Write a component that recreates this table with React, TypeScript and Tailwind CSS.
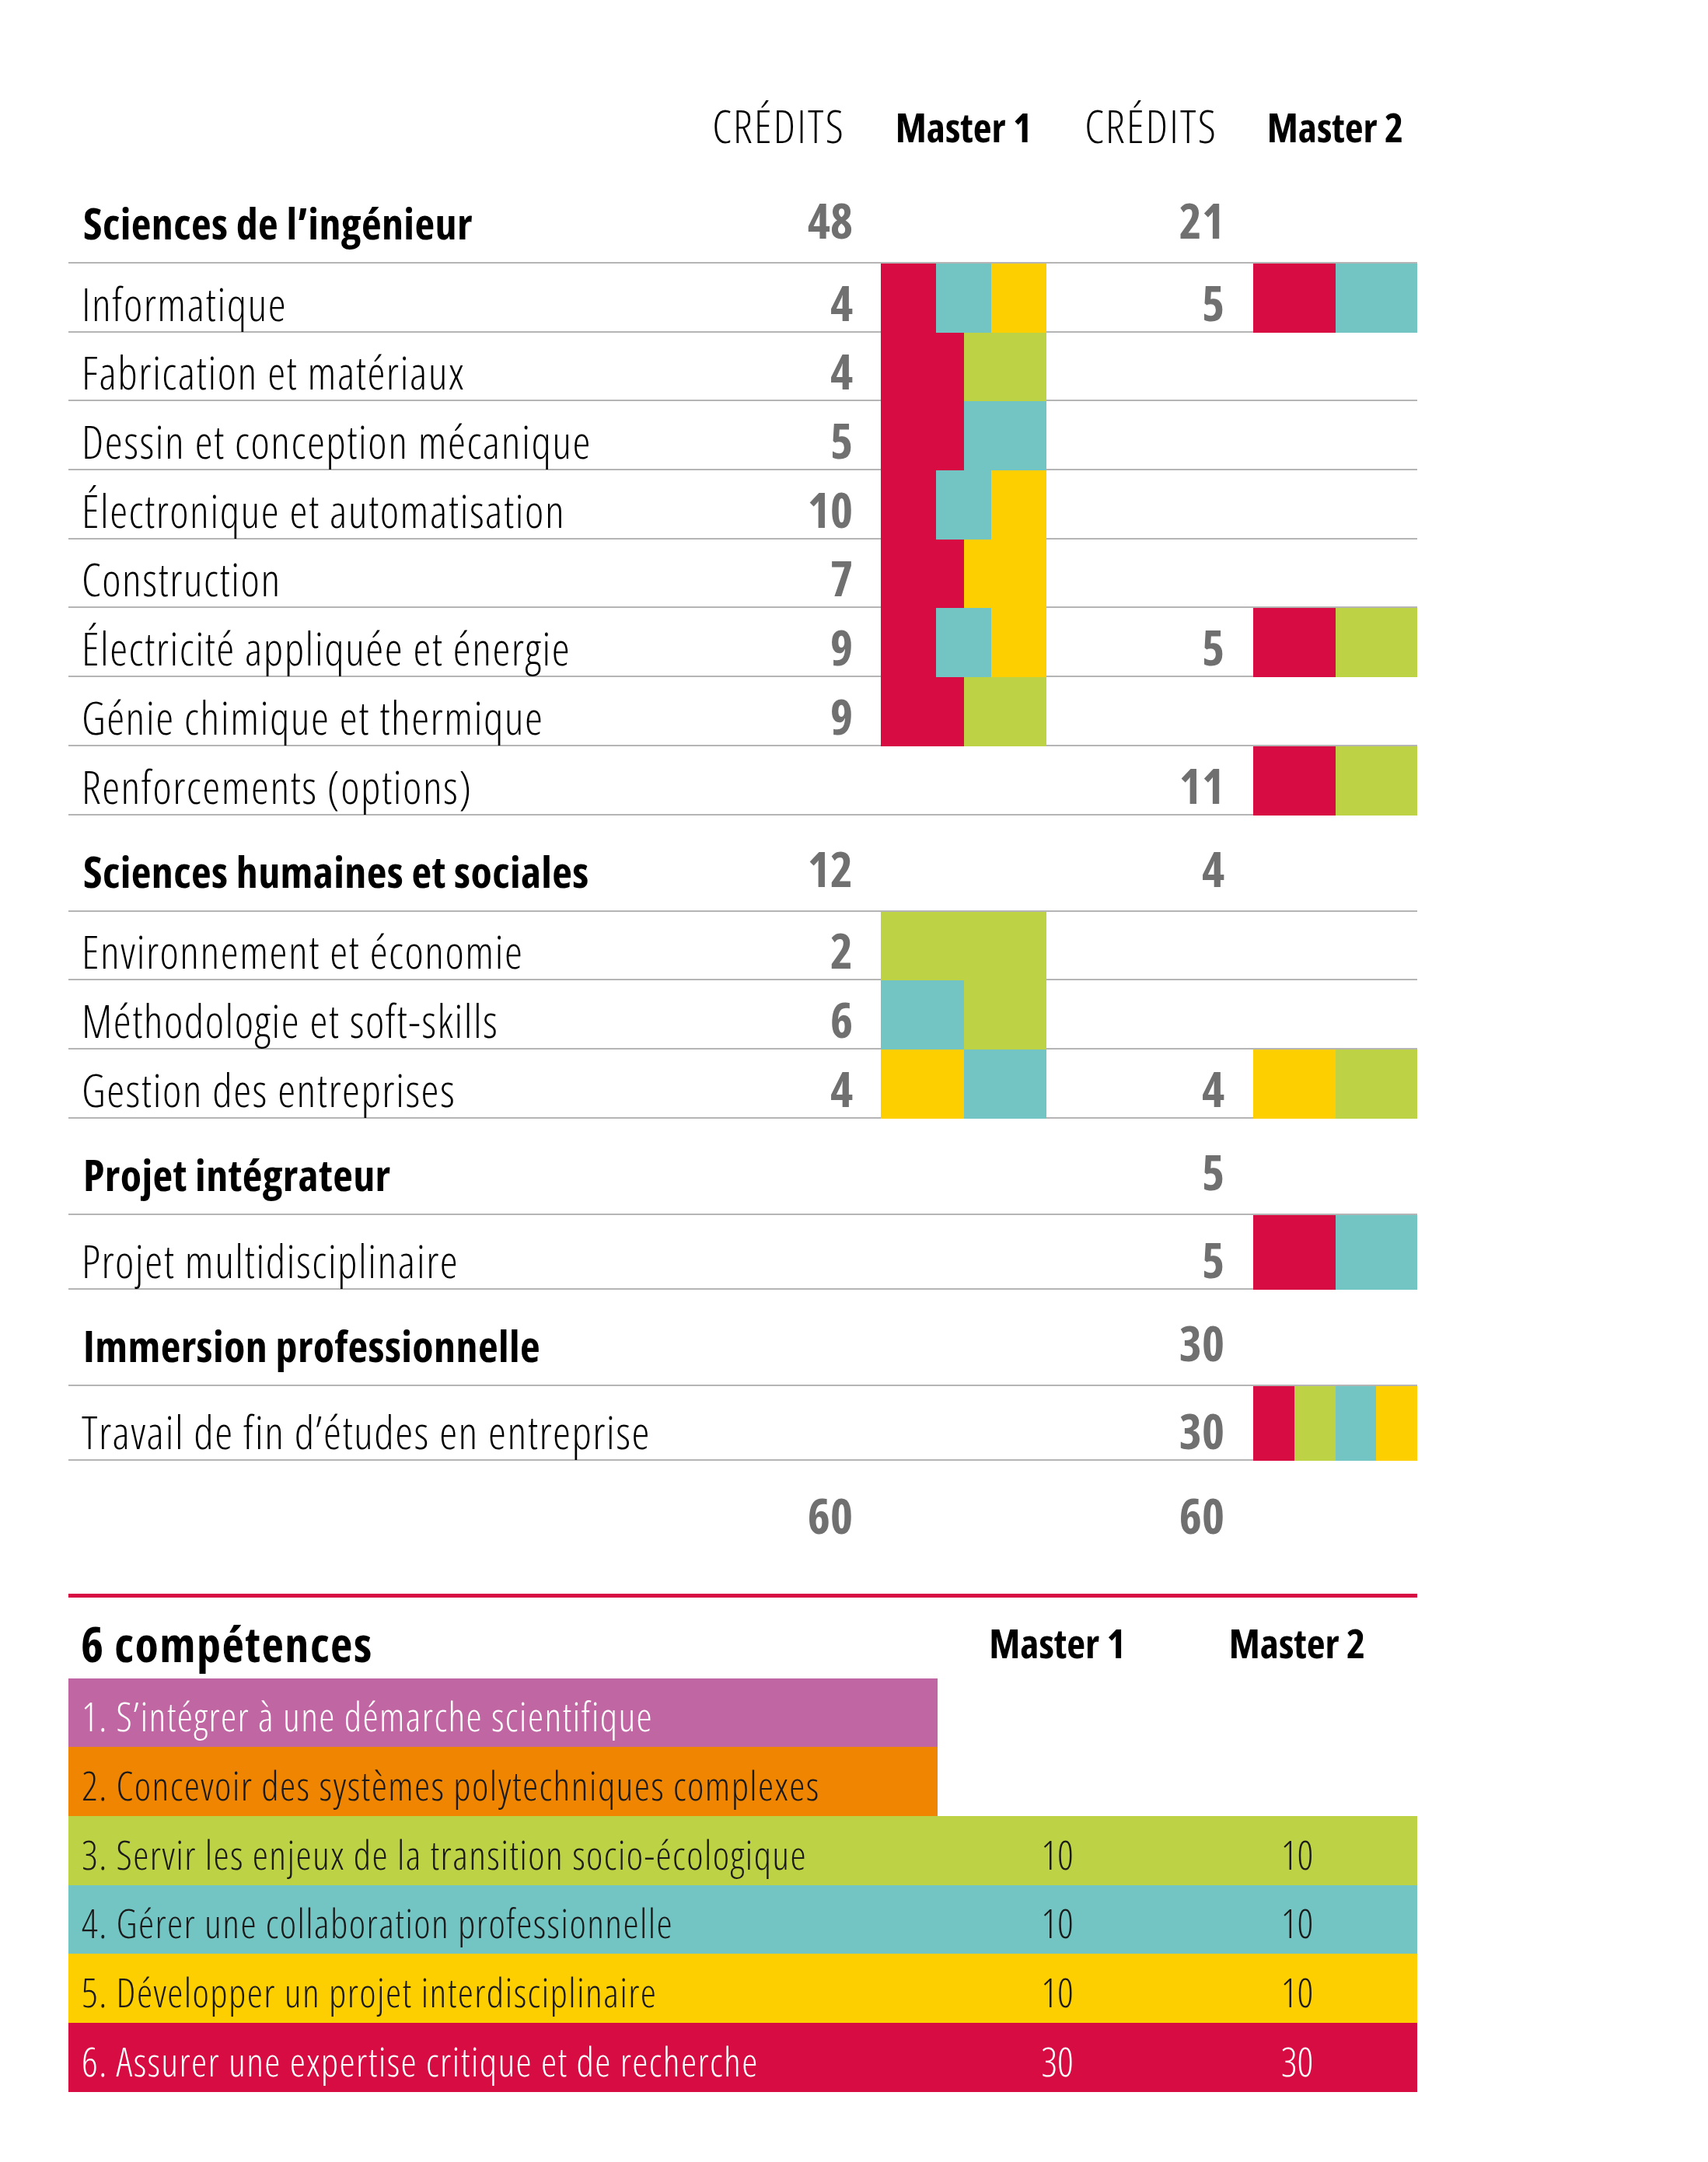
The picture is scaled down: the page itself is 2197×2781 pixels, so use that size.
import React from "react"

type Col = "red" | "teal" | "yellow" | "green"

const fill: Record<Col, string> = {
  red: "bg-[#d70c43]",
  teal: "bg-[#72c5c3]",
  yellow: "bg-[#fdcf00]",
  green: "bg-[#bed245]",
}

const grid = "grid grid-cols-[815px_230px_213px_266px_211px]"
const line = "border-b-2 border-[#b5b5b5]"
const num = "text-[62px] font-bold text-[#707070] leading-none"

type Item = { label: string; c1?: string; m1?: Col[]; c2?: string; m2?: Col[]; tall?: boolean }
type Section = { title: string; c1?: string; c2?: string; items: Item[] }

const sections: Section[] = [
  {
    title: "Sciences de l’ingénieur",
    c1: "48",
    c2: "21",
    items: [
      { label: "Informatique", c1: "4", m1: ["red", "teal", "yellow"], c2: "5", m2: ["red", "teal"] },
      { label: "Fabrication et matériaux", c1: "4", m1: ["red", "green"] },
      { label: "Dessin et conception mécanique", c1: "5", m1: ["red", "teal"] },
      { label: "Électronique et automatisation", c1: "10", m1: ["red", "teal", "yellow"] },
      { label: "Construction", c1: "7", m1: ["red", "yellow"] },
      { label: "Électricité appliquée et énergie", c1: "9", m1: ["red", "teal", "yellow"], c2: "5", m2: ["red", "green"] },
      { label: "Génie chimique et thermique", c1: "9", m1: ["red", "green"] },
      { label: "Renforcements (options)", c2: "11", m2: ["red", "green"] },
    ],
  },
  {
    title: "Sciences humaines et sociales",
    c1: "12",
    c2: "4",
    items: [
      { label: "Environnement et économie", c1: "2", m1: ["green"] },
      { label: "Méthodologie et soft-skills", c1: "6", m1: ["teal", "green"] },
      { label: "Gestion des entreprises", c1: "4", m1: ["yellow", "teal"], c2: "4", m2: ["yellow", "green"] },
    ],
  },
  {
    title: "Projet intégrateur",
    c2: "5",
    items: [{ label: "Projet multidisciplinaire", c2: "5", m2: ["red", "teal"], tall: true }],
  },
  {
    title: "Immersion professionnelle",
    c2: "30",
    items: [
      { label: "Travail de fin d’études en entreprise", c2: "30", m2: ["red", "green", "teal", "yellow"], tall: true },
    ],
  },
]

const competences = [
  { label: "1. S’intégrer à une démarche scientifique", bg: "bg-[#c066a3]", text: "text-white" },
  { label: "2. Concevoir des systèmes polytechniques complexes", bg: "bg-[#ef8500]", text: "text-[#1a1a1a]" },
  { label: "3. Servir les enjeux de la transition socio-écologique", bg: "bg-[#bed245]", text: "text-[#1a1a1a]", m1: "10", m2: "10" },
  { label: "4. Gérer une collaboration professionnelle", bg: "bg-[#72c5c3]", text: "text-[#1a1a1a]", m1: "10", m2: "10" },
  { label: "5. Développer un projet interdisciplinaire", bg: "bg-[#fdcf00]", text: "text-[#1a1a1a]", m1: "10", m2: "10" },
  { label: "6. Assurer une expertise critique et de recherche", bg: "bg-[#d70c43]", text: "text-white", m1: "30", m2: "30" },
]

function Blocks({ cols }: { cols?: Col[] }) {
  if (!cols || cols.length === 0) return <div className={line} />
  return (
    <div className="flex">
      {cols.map((c, i) => (
        <div key={i} className={`flex-1 ${fill[c]}`} />
      ))}
    </div>
  )
}

function ItemRow({ item }: { item: Item }) {
  return (
    <div className={`${grid} ${item.tall ? "h-[96px]" : "h-[88.7px]"}`}>
      <div className={`${line} flex items-end pl-[17px] pb-[6px] text-[58px] font-light leading-none tracking-[1.5px] text-black`}>
        {item.label}
      </div>
      <div className={`${line} flex items-end justify-end pr-[36px] pb-[6px] ${num}`}>{item.c1}</div>
      <Blocks cols={item.m1} />
      <div className={`${line} flex items-end justify-end pr-[37px] pb-[6px] ${num}`}>{item.c2}</div>
      <Blocks cols={item.m2} />
    </div>
  )
}

function SectionHead({ s }: { s: Section }) {
  return (
    <div className={`${grid} h-[124px] ${line}`}>
      <div className="flex items-end pl-[19px] pb-[23px] text-[56px] font-bold leading-none tracking-[0.4px] text-black">{s.title}</div>
      <div className={`flex items-end justify-end pr-[36px] pb-[23px] ${num}`}>{s.c1}</div>
      <div />
      <div className={`flex items-end justify-end pr-[37px] pb-[23px] ${num}`}>{s.c2}</div>
      <div />
    </div>
  )
}

export default function App() {
  return (
    <div className="w-[2197px] min-h-[2781px] bg-white font-['Open_Sans','Liberation_Sans',sans-serif] [font-stretch:75%]">
      <div className="pl-[88px] w-[1823px]">
        {/* column headers */}
        <div className={`${grid} h-[215px]`}>
          <div />
          <div className="flex items-end justify-end pr-[46px] pb-[24px] text-[58px] font-light leading-none tracking-[2.2px] text-black">CRÉDITS</div>
          <div className="flex items-end justify-center pb-[26px] text-[52px] font-bold leading-none text-black">Master 1</div>
          <div className="flex items-end justify-end pr-[46px] pb-[24px] text-[58px] font-light leading-none tracking-[2.2px] text-black">CRÉDITS</div>
          <div className="flex items-end justify-center pb-[26px] text-[52px] font-bold leading-none text-black">Master 2</div>
        </div>

        {sections.map((s) => (
          <div key={s.title}>
            <SectionHead s={s} />
            {s.items.map((it) => (
              <ItemRow key={it.label} item={it} />
            ))}
          </div>
        ))}

        {/* totals */}
        <div className={`${grid} h-[171px]`}>
          <div />
          <div className={`flex items-end justify-end pr-[36px] pb-[70px] ${num}`}>60</div>
          <div />
          <div className={`flex items-end justify-end pr-[37px] pb-[70px] ${num}`}>60</div>
          <div />
        </div>

        <div className="h-[5px] bg-[#d70c43]" />

        {/* compétences */}
        <div className="grid grid-cols-[1118px_308px_309px] h-[104px]">
          <div className="flex items-end pl-[16px] pb-[14px] text-[62px] font-bold leading-none tracking-[1.5px] text-black">6 compétences</div>
          <div className="flex items-end justify-center pb-[20px] text-[52px] font-bold leading-none text-black">Master 1</div>
          <div className="flex items-end justify-center pb-[20px] text-[52px] font-bold leading-none text-black">Master 2</div>
        </div>

        {competences.map((c) => {
          const wide = c.m1 !== undefined
          return (
            <div
              key={c.label}
              className={`grid grid-cols-[1118px_308px_309px] h-[88.7px] ${wide ? c.bg : ""} ${c.text} text-[51px] font-light leading-none`}
            >
              <div className={`flex items-end pl-[17px] pb-[14px] tracking-[1.4px] ${wide ? "" : c.bg}`}>{c.label}</div>
              <div className="flex items-end justify-center pb-[14px]">{c.m1}</div>
              <div className="flex items-end justify-center pb-[14px]">{c.m2}</div>
            </div>
          )
        })}
      </div>
    </div>
  )
}
